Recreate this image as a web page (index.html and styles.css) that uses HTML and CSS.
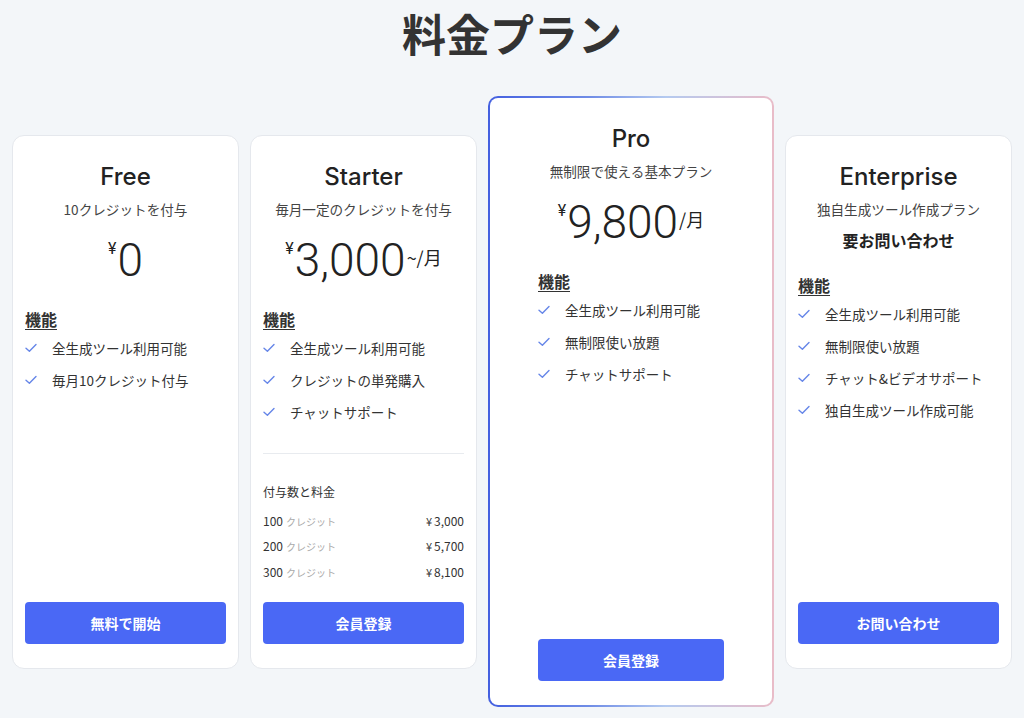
FILE: index.html
```html
<!DOCTYPE html>
<html lang="ja">
<head>
<meta charset="utf-8">
<title>料金プラン</title>
<link rel="stylesheet" href="styles.css">
</head>
<body>
<main class="page">
  <h1 class="title">料金プラン</h1>
  <div class="plans">
    <section class="card">
      <h2 class="plan-name">Free</h2>
      <p class="plan-desc">10クレジットを付与</p>
      <div class="price"><span class="yen">¥</span><span class="amount">0</span></div>
      <div class="features">
        <h3 class="features-title">機能</h3>
        <ul class="feature-list">
          <li><svg class="check" viewBox="0 0 12 10"><path d="M1 5.2 L4.4 8.3 L11 1.4"/></svg>全生成ツール利用可能</li>
          <li><svg class="check" viewBox="0 0 12 10"><path d="M1 5.2 L4.4 8.3 L11 1.4"/></svg>毎月10クレジット付与</li>
        </ul>
      </div>
      <a class="btn" href="#">無料で開始</a>
    </section>

    <section class="card">
      <h2 class="plan-name">Starter</h2>
      <p class="plan-desc">毎月一定のクレジットを付与</p>
      <div class="price"><span class="yen">¥</span><span class="amount">3,000</span><span class="suffix">~/月</span></div>
      <div class="features">
        <h3 class="features-title">機能</h3>
        <ul class="feature-list">
          <li><svg class="check" viewBox="0 0 12 10"><path d="M1 5.2 L4.4 8.3 L11 1.4"/></svg>全生成ツール利用可能</li>
          <li><svg class="check" viewBox="0 0 12 10"><path d="M1 5.2 L4.4 8.3 L11 1.4"/></svg>クレジットの単発購入</li>
          <li><svg class="check" viewBox="0 0 12 10"><path d="M1 5.2 L4.4 8.3 L11 1.4"/></svg>チャットサポート</li>
        </ul>
      </div>
      <div class="credits">
        <p class="credits-title">付与数と料金</p>
        <div class="credit-rows">
          <div class="credit-row"><span class="credit-qty">100<span class="credit-unit">クレジット</span></span><span class="credit-price"><span class="cur">¥</span>3,000</span></div>
          <div class="credit-row"><span class="credit-qty">200<span class="credit-unit">クレジット</span></span><span class="credit-price"><span class="cur">¥</span>5,700</span></div>
          <div class="credit-row"><span class="credit-qty">300<span class="credit-unit">クレジット</span></span><span class="credit-price"><span class="cur">¥</span>8,100</span></div>
        </div>
      </div>
      <a class="btn" href="#">会員登録</a>
    </section>

    <section class="card card--featured">
      <h2 class="plan-name">Pro</h2>
      <p class="plan-desc">無制限で使える基本プラン</p>
      <div class="price"><span class="yen">¥</span><span class="amount">9,800</span><span class="suffix">/月</span></div>
      <div class="features">
        <h3 class="features-title">機能</h3>
        <ul class="feature-list">
          <li><svg class="check" viewBox="0 0 12 10"><path d="M1 5.2 L4.4 8.3 L11 1.4"/></svg>全生成ツール利用可能</li>
          <li><svg class="check" viewBox="0 0 12 10"><path d="M1 5.2 L4.4 8.3 L11 1.4"/></svg>無制限使い放題</li>
          <li><svg class="check" viewBox="0 0 12 10"><path d="M1 5.2 L4.4 8.3 L11 1.4"/></svg>チャットサポート</li>
        </ul>
      </div>
      <a class="btn" href="#">会員登録</a>
    </section>

    <section class="card">
      <h2 class="plan-name">Enterprise</h2>
      <p class="plan-desc">独自生成ツール作成プラン</p>
      <p class="contact">要お問い合わせ</p>
      <div class="features">
        <h3 class="features-title">機能</h3>
        <ul class="feature-list">
          <li><svg class="check" viewBox="0 0 12 10"><path d="M1 5.2 L4.4 8.3 L11 1.4"/></svg>全生成ツール利用可能</li>
          <li><svg class="check" viewBox="0 0 12 10"><path d="M1 5.2 L4.4 8.3 L11 1.4"/></svg>無制限使い放題</li>
          <li><svg class="check" viewBox="0 0 12 10"><path d="M1 5.2 L4.4 8.3 L11 1.4"/></svg>チャット&amp;ビデオサポート</li>
          <li><svg class="check" viewBox="0 0 12 10"><path d="M1 5.2 L4.4 8.3 L11 1.4"/></svg>独自生成ツール作成可能</li>
        </ul>
      </div>
      <a class="btn" href="#">お問い合わせ</a>
    </section>
  </div>
</main>
</body>
</html>
```

FILE: styles.css
```css
html, body {
  margin: 0;
  padding: 0;
}

body {
  background: #f3f6f9;
  font-family: "Noto Sans CJK JP", "Noto Sans", sans-serif;
  color: #333;
}

.title {
  margin: 0;
  text-align: center;
  font-size: 44px;
  line-height: 66px;
  font-weight: 700;
  color: #333;
}

.plans {
  display: flex;
  align-items: center;
  gap: 11px;
  padding: 0 12px;
  margin-top: 30px;
}

.card {
  flex: 1 1 0;
  height: 534px;
  box-sizing: border-box;
  background: #fff;
  border: 1px solid #e5e8ed;
  border-radius: 12px;
  padding: 26px 12px 24px;
  display: flex;
  flex-direction: column;
}

.card--featured {
  flex: 0 0 286px;
  height: 611px;
  border: 2px solid transparent;
  border-radius: 10px;
  background:
    linear-gradient(#fff, #fff) padding-box,
    linear-gradient(90deg, #4460e0 0%, #6f8ce6 35%, #b4caf0 62%, #e9bcc8 100%) border-box;
  padding: 26px 48px 24px;
}

.plan-name {
  margin: 0;
  text-align: center;
  font-family: "Inter", "Roboto", sans-serif;
  font-weight: 500;
  font-size: 24px;
  line-height: 29px;
  color: #222;
}

.plan-desc {
  margin: 8px 0 0;
  text-align: center;
  font-size: 13.6px;
  line-height: 20px;
  color: #444;
}

.price {
  margin-top: 12px;
  height: 58px;
  display: flex;
  justify-content: center;
  align-items: flex-start;
  color: #222;
}

.yen {
  font-family: "Roboto", sans-serif;
  font-size: 16px;
  line-height: 1;
  margin-top: 10px;
  margin-right: 1px;
}

.amount {
  font-family: "Roboto", sans-serif;
  font-weight: 300;
  font-size: 46px;
  line-height: 58px;
}

.suffix {
  font-size: 18px;
  line-height: 1;
  margin-top: 17px;
  margin-left: 1px;
}

.contact {
  margin: 9px 0 0;
  padding-bottom: 3px;
  text-align: center;
  font-size: 16px;
  line-height: 24px;
  font-weight: 700;
  color: #222;
}

.features {
  margin-top: 18px;
}

.features-title {
  margin: 0;
  font-size: 16px;
  line-height: 24px;
  font-weight: 700;
  color: #333;
  text-decoration: underline;
  text-underline-offset: 3px;
  text-decoration-thickness: 1px;
}

.feature-list {
  list-style: none;
  margin: 1px 0 0;
  padding: 0;
}

.feature-list li {
  display: flex;
  align-items: center;
  height: 32px;
  font-size: 13.5px;
  color: #333;
}

.check {
  width: 12px;
  height: 10px;
  flex: none;
  margin-right: 15px;
  fill: none;
  stroke: #6686e8;
  stroke-width: 1.4;
  stroke-linecap: round;
  stroke-linejoin: round;
}

.credits {
  margin-top: 25px;
  border-top: 1px solid #e8ebef;
  padding-top: 29px;
}

.credits-title {
  margin: 0;
  font-size: 12px;
  line-height: 18px;
  color: #333;
}

.credit-rows {
  margin-top: 7px;
}

.credit-row {
  display: flex;
  justify-content: space-between;
  align-items: center;
  height: 25.5px;
  font-size: 12px;
  color: #333;
}

.credit-unit {
  font-size: 10px;
  color: #aaa;
  margin-left: 3px;
}

.cur {
  font-size: 11px;
  margin-right: 2px;
}

.btn {
  margin-top: auto;
  display: flex;
  align-items: center;
  justify-content: center;
  height: 42px;
  background: #4a68f5;
  color: #fff;
  font-size: 14px;
  font-weight: 700;
  border-radius: 4px;
  text-decoration: none;
}
```
